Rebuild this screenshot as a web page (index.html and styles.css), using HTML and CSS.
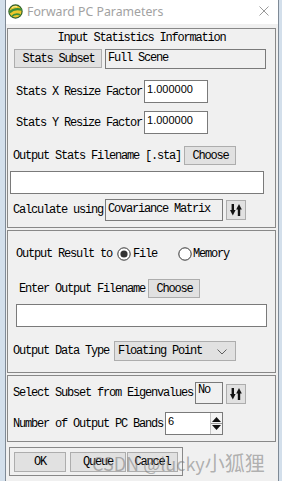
FILE: index.html
```html
<!DOCTYPE html>
<html lang="en">
<head>
    <meta charset="UTF-8">
    <title>Forward PC Parameters</title>
    <link rel="stylesheet" href="styles.css">
</head>
<body>
    <div class="window">
        <div class="titlebar">
            <svg class="app-icon" width="15" height="15" viewBox="0 0 15 15">
                <circle cx="7.5" cy="7.5" r="6.6" fill="#ecc72c" stroke="#2f5f2a" stroke-width="1.2"/>
                <path d="M1.5 8.5 C4.5 5.5 9 4.5 13.8 5.8" stroke="#3b8f3b" stroke-width="2.2" fill="none"/>
                <path d="M3.5 12.8 C6 10 9 9.5 12.5 11" stroke="#3b8f3b" stroke-width="1.6" fill="none"/>
                <path d="M4 3.5 C5.5 2.6 7.5 2.4 9 2.8" stroke="#fff6b0" stroke-width="1" fill="none"/>
            </svg>
            <span class="title">Forward PC Parameters</span>
            <svg class="close" width="10" height="10" viewBox="0 0 10 10">
                <path d="M0.5 0.5 L9.5 9.5 M9.5 0.5 L0.5 9.5" stroke="#9a9a9a" stroke-width="1"/>
            </svg>
        </div>

        <div class="client">
            <div class="group group-input">
                <div class="row row-head">Input Statistics Information</div>
                <div class="row row-subset">
                    <button class="btn btn-subset">Stats Subset</button>
                    <div class="field field-ro field-scene">Full Scene</div>
                </div>
                <div class="row row-factor row-x">
                    <span class="lbl">Stats X Resize Factor</span>
                    <div class="field field-num">1.000000</div>
                </div>
                <div class="row row-factor row-y">
                    <span class="lbl">Stats Y Resize Factor</span>
                    <div class="field field-num">1.000000</div>
                </div>
                <div class="row row-stafile">
                    <span class="lbl">Output Stats Filename [.sta]</span>
                    <button class="btn btn-choose">Choose</button>
                </div>
                <div class="row row-stapath">
                    <div class="field field-stapath"></div>
                </div>
                <div class="row row-calc">
                    <span class="lbl">Calculate using</span>
                    <div class="field field-ro field-calc">Covariance Matrix</div>
                    <button class="btn btn-toggle">
                        <svg width="12" height="12" viewBox="0 0 12 12">
                            <rect x="1.6" y="0" width="2.4" height="7" fill="#111"/>
                            <polygon points="0,6 5.6,6 2.8,11.5" fill="#111"/>
                            <polygon points="6.2,5.5 11.8,5.5 9,0" fill="#111"/>
                            <rect x="7.8" y="5" width="2.4" height="7" fill="#111"/>
                        </svg>
                    </button>
                </div>
            </div>

            <div class="group group-output">
                <div class="row row-result">
                    <span class="lbl">Output Result to</span>
                    <svg class="radio" width="14" height="14" viewBox="0 0 14 14">
                        <circle cx="7" cy="7" r="6.2" fill="#fff" stroke="#333" stroke-width="1"/>
                        <circle cx="7" cy="7" r="3.6" fill="#333"/>
                    </svg>
                    <span class="lbl opt-file">File</span>
                    <svg class="radio radio-mem" width="14" height="14" viewBox="0 0 14 14">
                        <circle cx="7" cy="7" r="6.2" fill="#fff" stroke="#333" stroke-width="1"/>
                    </svg>
                    <span class="lbl opt-mem">Memory</span>
                </div>
                <div class="row row-enter">
                    <span class="lbl">Enter Output Filename</span>
                    <button class="btn btn-choose">Choose</button>
                </div>
                <div class="row row-outpath">
                    <div class="field field-outpath"></div>
                </div>
                <div class="row row-dtype">
                    <span class="lbl">Output Data Type</span>
                    <div class="combo">
                        <span class="combo-text">Floating Point</span>
                        <svg class="chev" width="10" height="6" viewBox="0 0 10 6">
                            <polyline points="0.5,0.5 5,5 9.5,0.5" fill="none" stroke="#606060" stroke-width="1"/>
                        </svg>
                    </div>
                </div>
            </div>

            <div class="group group-eigen">
                <div class="row row-eig">
                    <span class="lbl">Select Subset from Eigenvalues</span>
                    <div class="field field-ro field-no">No</div>
                    <button class="btn btn-toggle btn-toggle-eig">
                        <svg width="12" height="12" viewBox="0 0 12 12">
                            <rect x="1.6" y="0" width="2.4" height="7" fill="#111"/>
                            <polygon points="0,6 5.6,6 2.8,11.5" fill="#111"/>
                            <polygon points="6.2,5.5 11.8,5.5 9,0" fill="#111"/>
                            <rect x="7.8" y="5" width="2.4" height="7" fill="#111"/>
                        </svg>
                    </button>
                </div>
                <div class="row row-bands">
                    <span class="lbl">Number of Output PC Bands</span>
                    <div class="field field-spin">
                        <span class="spin-val">6</span>
                        <div class="spin">
                            <svg width="11" height="19" viewBox="0 0 11 19">
                                <polygon points="1,8 10,8 5.5,3" fill="#111"/>
                                <line x1="0" y1="9.5" x2="11" y2="9.5" stroke="#9a9a9a" stroke-width="1"/>
                                <polygon points="1,11 10,11 5.5,16" fill="#111"/>
                            </svg>
                        </div>
                    </div>
                </div>
            </div>

            <div class="group group-actions">
                <button class="btn btn-ok">OK</button>
                <button class="btn btn-queue">Queue</button>
                <button class="btn btn-cancel">Cancel</button>
            </div>
        </div>
    </div>
    <div class="watermark">CSDN @lucky<span class="wm-cjk">小狐狸</span></div>
</body>
</html>
```

FILE: styles.css
```css
:root {
    --client-bg: #f0f0f0; --frame: #7f8a96; --group-line: #888888;
    --btn-bg: #e1e1e1; --btn-line: #adadad; --field-line: #7a7a7a;
    --ui-font: 'Liberation Mono', 'Courier New', monospace;
}
body { margin: 0; width: 282px; height: 481px; overflow: hidden; position: relative; background: #d3dfeb; font-family: var(--ui-font); font-size: 12px; letter-spacing: -1.2px; color: #000; }
.window { margin-left: 5px; width: 274px; height: 481px; box-sizing: border-box; border-left: 1px solid var(--frame); border-right: 1px solid var(--frame); background: var(--client-bg); }
.titlebar { height: 24px; background: #ffffff; display: flex; align-items: center; letter-spacing: 0; }
.app-icon { margin-left: 2px; margin-top: -1px; }
.title { margin-left: 4px; font-family: 'Noto Sans', 'Open Sans', sans-serif; font-size: 12.3px; color: #a2a2a2; margin-top: -2px; }
.close { margin-left: auto; margin-right: 9px; margin-top: -2px; }
.client { padding-top: 4px; }

.group { margin-left: 1px; width: 269px; box-sizing: border-box; border: 1px solid var(--group-line); }
.group-input { height: 200px; }
.group-output { height: 143px; margin-top: 2px; }
.group-eigen { height: 67px; margin-top: 2px; }
.group-actions { margin-left: 3px; width: 174px; height: 29px; margin-top: 5px; padding: 4px 0 0 4px; display: flex; align-items: flex-start; }

.row { display: flex; align-items: center; }
.lbl { white-space: pre; }

.btn { box-sizing: border-box; border: 1px solid var(--btn-line); background: var(--btn-bg); font-family: var(--ui-font); font-size: 12px; letter-spacing: -1.2px; color: #000; padding: 0; margin: 0; display: flex; align-items: center; justify-content: center; }
.field { box-sizing: border-box; border: 1px solid var(--field-line); background: #ffffff; line-height: 16px; padding-left: 2px; white-space: pre; }
.field-ro { background: var(--client-bg); }

.row-head { height: 17px; justify-content: center; }
.row-subset { margin-top: 3px; height: 20px; padding-left: 6px; align-items: flex-start; }
.btn-subset { width: 88px; height: 19px; padding-left: 1px; }
.field-scene { margin-left: 3px; width: 161px; height: 20px; padding-left: 2px; }

.row-factor { height: 23px; padding-left: 8px; }
.row-x { margin-top: 11px; }
.row-y { margin-top: 8px; }
.field-num { margin-left: 2px; width: 64px; height: 23px; font-family: 'Liberation Sans', Arial, sans-serif; font-size: 11px; letter-spacing: 0; line-height: 17px; }

.row-stafile { margin-top: 12px; height: 19px; padding-left: 5px; }
.btn-choose { margin-left: 3px; width: 52px; height: 19px; padding-left: 1px; }
.row-stapath { margin-top: 6px; padding-left: 2px; }
.field-stapath { width: 254px; height: 23px; }

.row-calc { margin-top: 5px; height: 22px; padding-left: 5px; }
.field-calc { margin-left: 2px; width: 118px; height: 22px; line-height: 18px; }
.btn-toggle { margin-left: 3px; width: 20px; height: 20px; }

.row-result { margin-top: 15px; height: 16px; padding-left: 8px; }
.radio { margin-left: 5px; }
.opt-file { margin-left: 2px; }
.radio-mem { margin-left: 21px; }
.opt-mem { margin-left: 1px; }

.row-enter { margin-top: 17px; height: 19px; padding-left: 11px; }
.row-outpath { margin-top: 6px; padding-left: 8px; }
.field-outpath { width: 251px; height: 23px; }

.row-dtype { margin-top: 14px; height: 20px; padding-left: 5px; }
.combo { margin-left: 5px; width: 122px; height: 20px; box-sizing: border-box; border: 1px solid var(--btn-line); background: var(--btn-bg); display: flex; align-items: center; padding-left: 3px; }
.combo-text { white-space: pre; }
.chev { margin-left: auto; margin-right: 8px; margin-top: 1px; }

.row-eig { margin-top: 6px; height: 22px; padding-left: 5px; }
.field-no { margin-left: 2px; width: 28px; height: 22px; line-height: 15px; }
.btn-toggle-eig { margin-top: 1px; }

.row-bands { margin-top: 8px; height: 23px; padding-left: 5px; }
.field-spin { margin-left: 2px; width: 58px; height: 23px; display: flex; padding-left: 0; }
.spin-val { padding-left: 2px; font-family: 'Liberation Sans', Arial, sans-serif; font-size: 11px; letter-spacing: 0; line-height: 17px; }
.spin { margin-left: auto; width: 11px; height: 21px; border-left: 1px solid #c4c4c4; background: #f4f4f4; display: flex; align-items: center; }

.btn-ok { width: 52px; height: 20px; }
.btn-queue { margin-left: 4px; width: 56px; height: 20px; }
.btn-cancel { margin-left: 1px; width: 51px; height: 20px; }

.watermark { position: absolute; left: 92px; top: 448px; font-family: 'Noto Sans CJK SC', 'Noto Sans', sans-serif; font-size: 18px; letter-spacing: 0; line-height: 30px; color: rgba(120, 120, 120, 0.55); white-space: nowrap; }
.wm-cjk { font-size: 20px; }
```
